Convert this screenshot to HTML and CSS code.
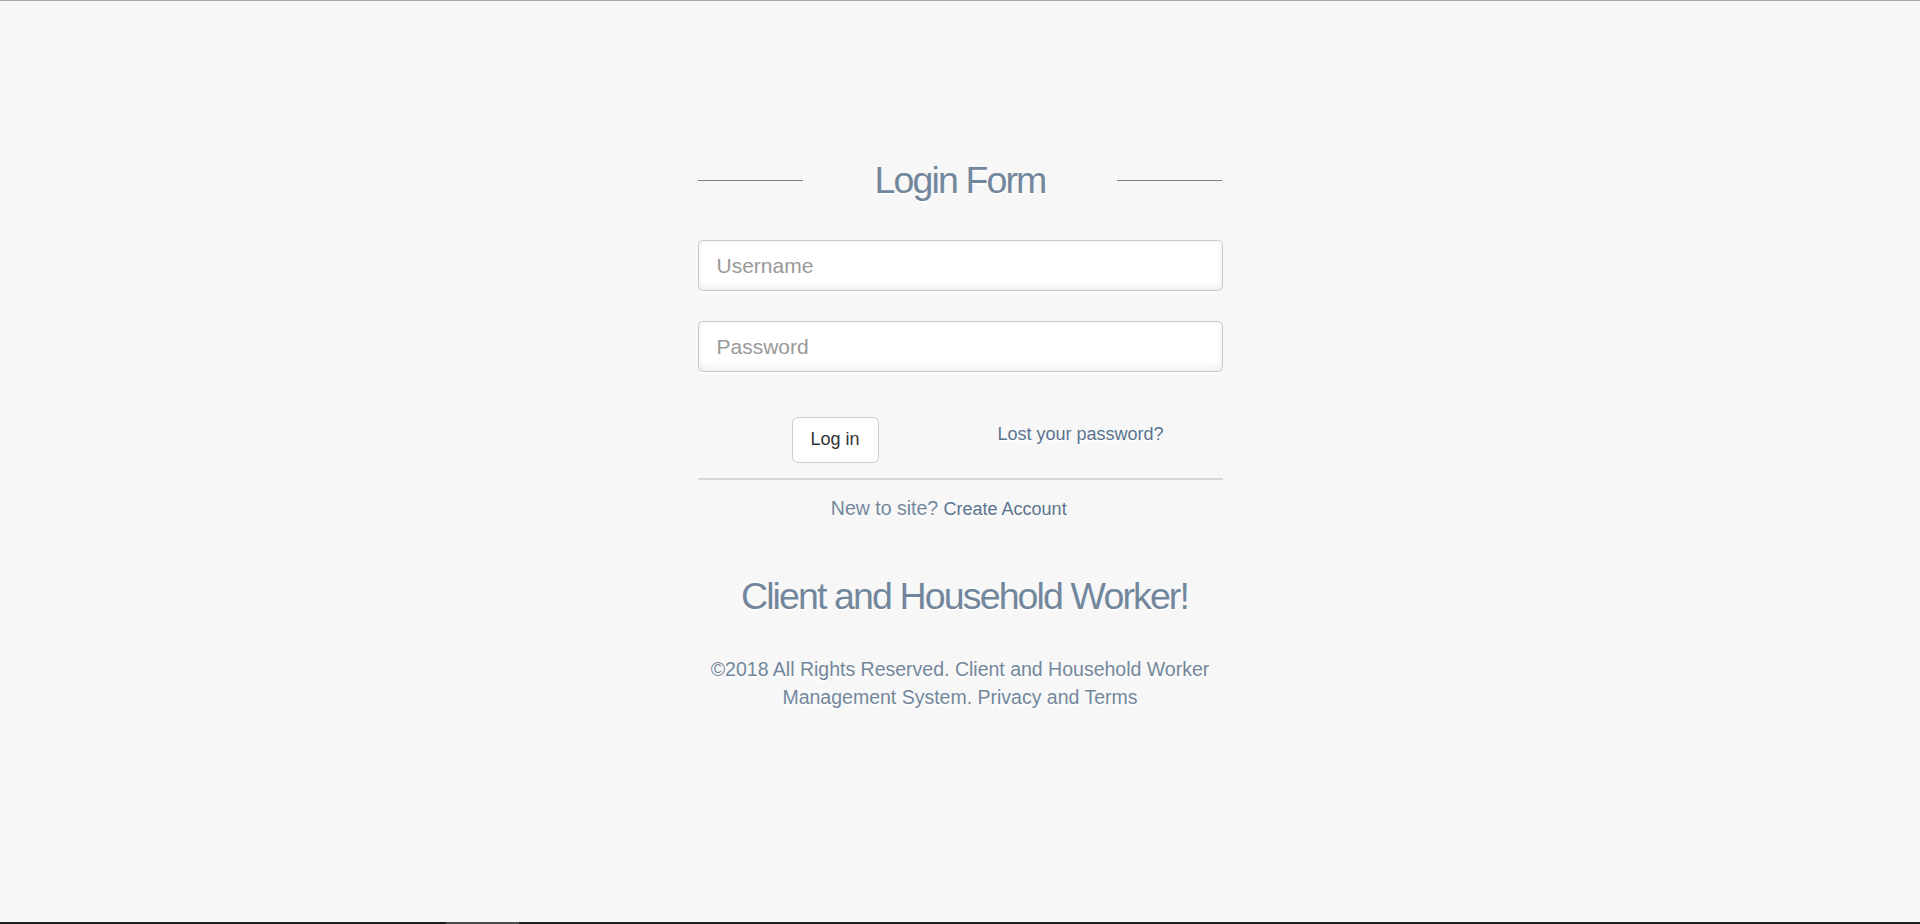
FILE: index.html
```html
<!DOCTYPE html>
<html lang="en">
<head>
<meta charset="utf-8">
<title>Login | Client and Household Worker Management System</title>
<link rel="stylesheet" href="styles.css">
</head>
<body>
<div class="page">
  <div class="top-rule"></div>
  <main class="login-wrapper">
    <section class="login-content">
      <form class="login-form">
        <h1 class="form-title">Login Form</h1>
        <input class="field" type="text" placeholder="Username">
        <input class="field" type="password" placeholder="Password">
        <div class="actions">
          <a class="btn-login" href="#">Log in</a>
          <a class="reset-pass" href="#">Lost your password?</a>
        </div>
        <div class="separator">
          <p class="change-link">New to site? <a class="to-register" href="#">Create Account</a></p>
          <div class="brand">
            <h1 class="brand-title">Client and Household Worker!</h1>
            <p class="copyright">©2018 All Rights Reserved. Client and Household Worker Management System. Privacy and Terms</p>
          </div>
        </div>
      </form>
    </section>
  </main>
  <div class="taskbar"><span class="taskbar-item"></span></div>
</div>
</body>
</html>
```
FILE: styles.css
```css
* {
  box-sizing: border-box;
}

html,
body {
  margin: 0;
  padding: 0;
}

body {
  background: #f7f7f7;
  font-family: "Liberation Sans", Arial, sans-serif;
  font-size: 19.5px;
  line-height: 1.42857;
  color: #73879c;
}

.page {
  min-height: 100vh;
  display: flex;
  flex-direction: column;
}

.top-rule {
  flex: none;
  height: 1px;
  background: #a9a9a9;
}

.login-wrapper {
  width: 525px;
  margin: 0 auto;
  padding-top: 164px;
}

.login-content {
  text-align: center;
  text-shadow: 0 1.5px 0 #fff;
}

.login-form {
  display: flex;
  flex-direction: column;
  margin: 0;
}

.form-title {
  display: flex;
  align-items: flex-start;
  justify-content: space-between;
  height: 30px;
  margin: 0 0 45px;
  font: 400 37.5px/30px "Liberation Sans", Arial, sans-serif;
  letter-spacing: -0.05em;
  color: #73879c;
}

.form-title::before,
.form-title::after {
  content: "";
  width: 20%;
  height: 1px;
  margin-top: 15px;
  background: #7e7e7e;
}

.field {
  display: block;
  width: 100%;
  height: 51px;
  margin: 0 0 30px;
  padding: 9px 18px;
  border: 1px solid #c8c8c8;
  border-radius: 4.5px;
  background: #fff;
  box-shadow: 0 1.5px 0 #fff, inset 0 -3px 7.5px rgba(0, 0, 0, 0.08);
  font: 21px/1.42857 "Liberation Sans", Arial, sans-serif;
  color: #777;
  outline: none;
}

.field::placeholder {
  color: #999;
}

.actions {
  display: flex;
  align-items: flex-start;
  height: 61px;
}

.btn-login {
  height: 46px;
  margin: 15px 0 0 94px;
  padding: 9px 18px;
  border: 1px solid #ccc;
  border-radius: 6px;
  background: #fff;
  color: #333;
  font-size: 18px;
  line-height: 25.7px;
  text-decoration: none;
}

.reset-pass {
  margin: 19.5px 0 0 119px;
  font-size: 18px;
  line-height: 25.7px;
  color: #5a738e;
  text-decoration: none;
}

.separator {
  margin-top: 15px;
  padding-top: 15px;
  border-top: 2px solid #d8d8d8;
}

.change-link {
  margin: 0;
}

.to-register {
  margin-right: 22.5px;
  font-size: 18px;
  color: #5a738e;
  text-decoration: none;
}

.brand {
  padding-top: 57.9px;
}

.brand-title {
  margin: 0 0 45px;
  padding-left: 9px;
  font: 400 37.5px/30px "Liberation Sans", Arial, sans-serif;
  letter-spacing: -0.05em;
  color: #73879c;
}

.copyright {
  margin: 0;
}

.taskbar {
  flex: none;
  display: flex;
  height: 2px;
  margin-top: auto;
  background: #1f1f1f;
}

.taskbar-item {
  width: 73px;
  margin-left: 446px;
  background: #4d4d4d;
}
```
